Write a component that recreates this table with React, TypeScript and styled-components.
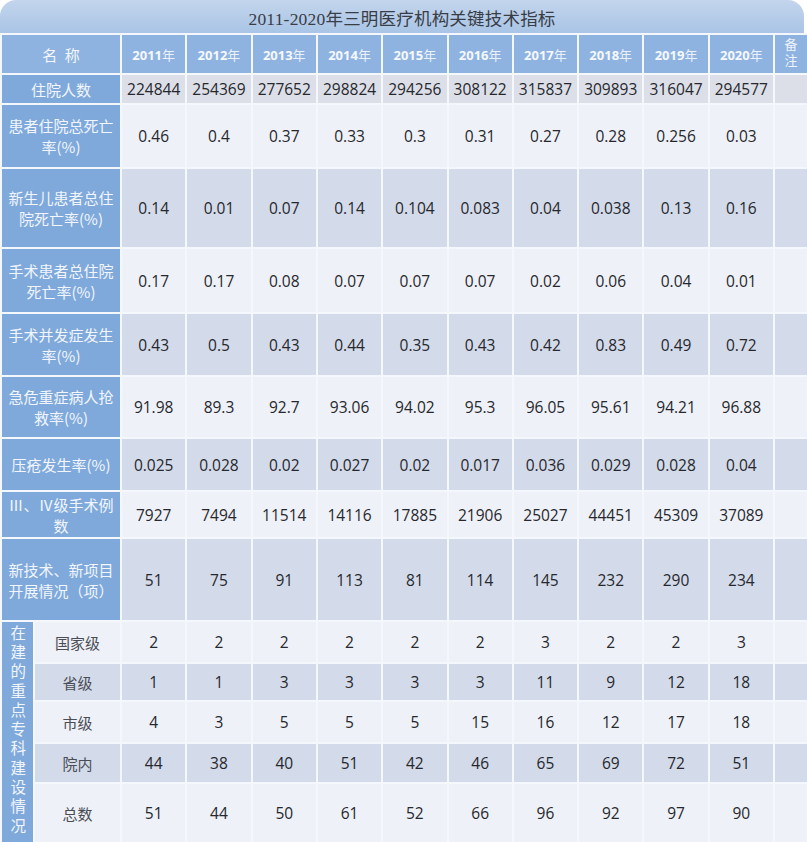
import React from "react";
import styled, { createGlobalStyle } from "styled-components";

const GlobalStyle = createGlobalStyle`
  html, body {
    margin: 0;
    padding: 0;
    background: #ffffff;
  }
`;

const years = [2011, 2012, 2013, 2014, 2015, 2016, 2017, 2018, 2019, 2020];

type Row = { label: string[]; h: number; values: (number | string)[] };

const mainRows: Row[] = [
  { label: ["住院人数"], h: 30, values: [224844, 254369, 277652, 298824, 294256, 308122, 315837, 309893, 316047, 294577] },
  { label: ["患者住院总死亡", "率(%)"], h: 64, values: ["0.46", "0.4", "0.37", "0.33", "0.3", "0.31", "0.27", "0.28", "0.256", "0.03"] },
  { label: ["新生儿患者总住", "院死亡率(%)"], h: 80, values: ["0.14", "0.01", "0.07", "0.14", "0.104", "0.083", "0.04", "0.038", "0.13", "0.16"] },
  { label: ["手术患者总住院", "死亡率(%)"], h: 65, values: ["0.17", "0.17", "0.08", "0.07", "0.07", "0.07", "0.02", "0.06", "0.04", "0.01"] },
  { label: ["手术并发症发生", "率(%)"], h: 63, values: ["0.43", "0.5", "0.43", "0.44", "0.35", "0.43", "0.42", "0.83", "0.49", "0.72"] },
  { label: ["急危重症病人抢", "救率(%)"], h: 62, values: ["91.98", "89.3", "92.7", "93.06", "94.02", "95.3", "96.05", "95.61", "94.21", "96.88"] },
  { label: ["压疮发生率(%)"], h: 53, values: ["0.025", "0.028", "0.02", "0.027", "0.02", "0.017", "0.036", "0.029", "0.028", "0.04"] },
  { label: ["Ⅲ、Ⅳ级手术例", "数"], h: 47, values: [7927, 7494, 11514, 14116, 17885, 21906, 25027, 44451, 45309, 37089] },
  { label: ["新技术、新项目", "开展情况（项）"], h: 83, values: [51, 75, 91, 113, 81, 114, 145, 232, 290, 234] },
];

const subRows: Row[] = [
  { label: ["国家级"], h: 42, values: [2, 2, 2, 2, 2, 2, 3, 2, 2, 3] },
  { label: ["省级"], h: 38, values: [1, 1, 3, 3, 3, 3, 11, 9, 12, 18] },
  { label: ["市级"], h: 42, values: [4, 3, 5, 5, 5, 15, 16, 12, 17, 18] },
  { label: ["院内"], h: 40, values: [44, 38, 40, 51, 42, 46, 65, 69, 72, 51] },
  { label: ["总数"], h: 60, values: [51, 44, 50, 61, 52, 66, 96, 92, 97, 90] },
];

export default function App() {
  return (
    <Page>
      <GlobalStyle />
      <TitleBar>2011-2020年三明医疗机构关键技术指标</TitleBar>
      <Table>
        <colgroup>
          <col style={{ width: 33 }} />
          <col style={{ width: 87 }} />
          {years.map((y) => (
            <col key={y} style={{ width: 65.3 }} />
          ))}
          <col style={{ width: 34 }} />
        </colgroup>
        <tbody>
          <Tr $h={40}>
            <HeadName colSpan={2}>名&nbsp;&nbsp;称</HeadName>
            {years.map((y) => (
              <HeadYear key={y}>
                {y}
                <Nian>年</Nian>
              </HeadYear>
            ))}
            <HeadNote>
              <Vertical $gap={3}>备注</Vertical>
            </HeadNote>
          </Tr>
          {mainRows.map((row, i) => (
            <Tr key={row.label.join("")} $h={row.h}>
              <NameCell colSpan={2}>
                {row.label.map((line, k) => (
                  <Line key={k}>{line}</Line>
                ))}
              </NameCell>
              {row.values.map((v, k) => (
                <DataCell key={k} $dark={i % 2 === 0} $grey={i === 0}>
                  {v}
                </DataCell>
              ))}
              <DataCell $dark={i % 2 === 0} $grey={i === 0} />
            </Tr>
          ))}
          {subRows.map((row, j) => {
            const dark = (mainRows.length + j) % 2 === 0;
            return (
              <Tr key={row.label[0]} $h={row.h}>
                {j === 0 && (
                  <GroupCell rowSpan={subRows.length}>
                    <Vertical $gap={3.8}>在建的重点专科建设情况</Vertical>
                  </GroupCell>
                )}
                <SubName $dark={dark}>{row.label[0]}</SubName>
                {row.values.map((v, k) => (
                  <DataCell key={k} $dark={dark}>
                    {v}
                  </DataCell>
                ))}
                <DataCell $dark={dark} />
              </Tr>
            );
          })}
        </tbody>
      </Table>
    </Page>
  );
}

const Page = styled.div`
  width: 807px;
  height: 842px;
  overflow: hidden;
  background: #ffffff;
`;

const TitleBar = styled.div`
  width: 804px;
  height: 33px;
  display: flex;
  align-items: center;
  justify-content: center;
  border-radius: 16px 16px 0 0;
  background: linear-gradient(180deg, #c3d5ec 0%, #a9c4e6 100%);
  color: #383d46;
  font-family: "Liberation Serif", "Noto Sans CJK SC", serif;
  font-size: 17.5px;
  letter-spacing: 0.2px;
  box-sizing: border-box;
  padding-top: 2px;
`;

const Table = styled.table`
  width: 807px;
  table-layout: fixed;
  border-collapse: collapse;
  font-family: "Open Sans", "Noto Sans CJK SC", sans-serif;
`;

const Tr = styled.tr<{ $h: number }>`
  height: ${(p) => p.$h}px;
`;

const Line = styled.span`
  display: block;
  text-align: center;
  white-space: nowrap;
`;

const Vertical = styled.span<{ $gap: number }>`
  display: inline-block;
  writing-mode: vertical-rl;
  text-orientation: upright;
  letter-spacing: ${(p) => p.$gap}px;
  line-height: 1;
`;

const cellBase = `
  border: 2px solid #f4f7fb;
  padding: 0;
  text-align: center;
  vertical-align: middle;
  box-sizing: border-box;
`;

const HeadName = styled.td`
  ${cellBase}
  background: #8fb3e1;
  color: #f3f7fc;
  font-family: "Liberation Serif", "Noto Sans CJK SC", serif;
  font-size: 15px;
`;

const HeadYear = styled.td`
  ${cellBase}
  background: #8fb3e1;
  color: #f5f8fd;
  font-size: 13px;
  font-weight: 700;
`;

const Nian = styled.span`
  font-weight: 400;
  font-family: "Noto Sans CJK SC", sans-serif;
  opacity: 0.9;
`;

const HeadNote = styled.td`
  ${cellBase}
  background: #8fb3e1;
  color: #eef3fa;
  font-family: "Noto Sans CJK SC", serif;
  font-size: 13px;
  line-height: 1;
`;

const NameCell = styled.td`
  ${cellBase}
  background: #7fa9db;
  color: #f2f6fc;
  font-family: "Noto Sans CJK SC", serif;
  font-size: 15px;
  line-height: 21px;
`;

const GroupCell = styled.td`
  ${cellBase}
  background: #7fa9db;
  color: #f2f6fc;
  font-family: "Noto Sans CJK SC", serif;
  font-size: 15.5px;
  line-height: 1;
  vertical-align: top;
  padding-top: 3px;
`;

const SubName = styled.td<{ $dark: boolean }>`
  ${cellBase}
  background: ${(p) => (p.$dark ? "#d3dae9" : "#eef1f7")};
  color: #4a4d55;
  font-family: "Noto Sans CJK SC", sans-serif;
  font-size: 15px;
`;

const DataCell = styled.td<{ $dark: boolean; $grey?: boolean }>`
  ${cellBase}
  background: ${(p) => (p.$grey ? "#dcdfe8" : p.$dark ? "#d3dae9" : "#eef1f7")};
  color: #26282d;
  font-size: 15.5px;
  font-weight: 500;
`;
